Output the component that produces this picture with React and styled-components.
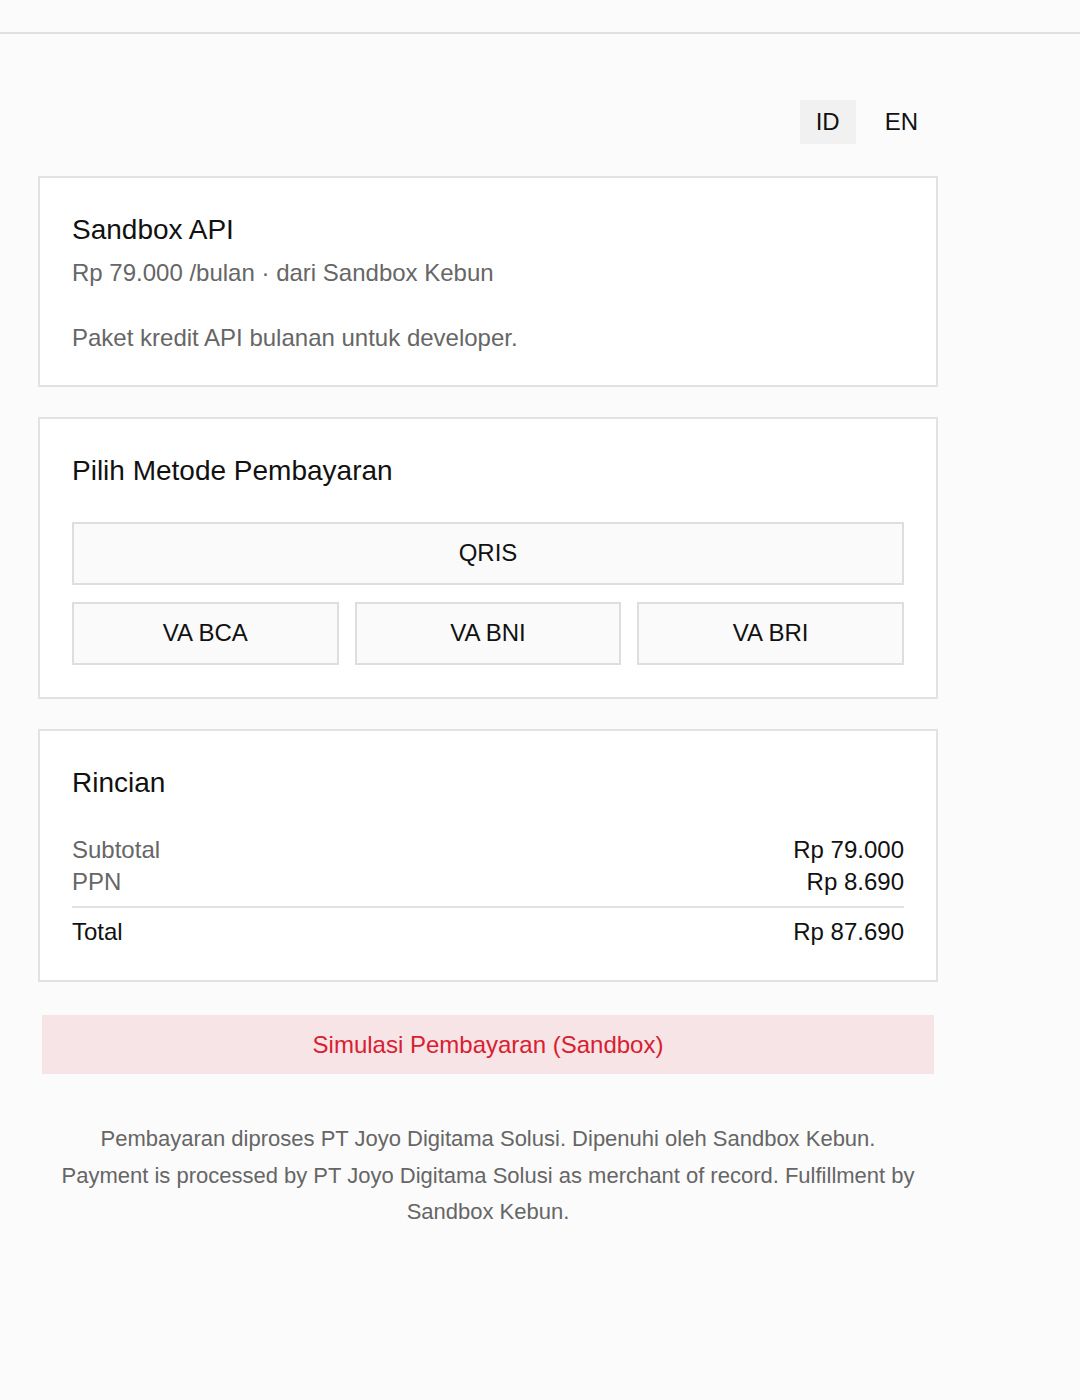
import React, { useState } from 'react';
import styled, { createGlobalStyle } from 'styled-components';

const GlobalStyle = createGlobalStyle`
  html, body {
    margin: 0;
    padding: 0;
    background: #fbfbfb;
    font-family: "Liberation Sans", Arial, sans-serif;
    color: #111;
  }
  * { box-sizing: border-box; }
`;

const TopBar = styled.div`
  height: 34px;
  border-bottom: 2px solid #e0e0e0;
`;

const Page = styled.main`
  width: 900px;
  margin-left: 38px;
  padding-top: 66px;
  padding-bottom: 120px;
`;

const LangRow = styled.div`
  display: flex;
  justify-content: flex-end;
  gap: 13px;
  padding-right: 4px;
  margin-bottom: 32px;
`;

const LangButton = styled.button`
  display: block;
  height: 44px;
  padding: 0 16px;
  border: none;
  background: ${p => (p.active ? '#f1f1f1' : 'transparent')};
  font-family: inherit;
  font-size: 24px;
  color: #111;
  cursor: pointer;
`;

const Card = styled.section`
  background: #fff;
  border: 2px solid #e2e2e2;
  padding: 32px;
  margin-bottom: 30px;
`;

const CardTitle = styled.h2`
  margin: 0 0 ${p => p.gap || 0}px;
  font-size: 28px;
  font-weight: 400;
  line-height: 1.4;
  color: #111;
`;

const Meta = styled.p`
  margin: ${p => p.top || 0}px 0 0;
  font-size: 24px;
  line-height: 1.2;
  color: #666;
`;

const Methods = styled.div`
  display: grid;
  grid-template-columns: repeat(3, 1fr);
  gap: 17px 16px;
`;

const MethodButton = styled.button`
  grid-column: ${p => (p.wide ? '1 / -1' : 'auto')};
  height: 63px;
  border: 2px solid #dedede;
  background: ${p => (p.selected ? '#f0f0f0' : '#fafafa')};
  font-family: inherit;
  font-size: 24px;
  color: #111;
  cursor: pointer;
`;

const Row = styled.div`
  display: flex;
  justify-content: space-between;
  font-size: 24px;
  line-height: 32px;
  color: ${p => (p.strong ? '#111' : '#666')};
`;

const Value = styled.span`
  color: #111;
`;

const Divider = styled.hr`
  border: none;
  border-top: 2px solid #e2e2e2;
  margin: 8px 0 8px;
`;

const PayButton = styled.button`
  display: block;
  width: calc(100% - 8px);
  margin: 33px auto 0;
  height: 59px;
  border: none;
  background: #f6e4e6;
  color: #d9202f;
  font-family: inherit;
  font-size: 24px;
  cursor: pointer;
`;

const Footer = styled.p`
  margin: 47px 0 0;
  text-align: center;
  font-size: 22px;
  line-height: 36.5px;
  color: #666;
`;

const methods = ['VA BCA', 'VA BNI', 'VA BRI'];

export default function App() {
  const [lang, setLang] = useState('ID');
  const [method, setMethod] = useState(null);

  return (
    <>
      <GlobalStyle />
      <TopBar />
      <Page>
        <LangRow>
          <LangButton active={lang === 'ID'} onClick={() => setLang('ID')}>ID</LangButton>
          <LangButton active={lang === 'EN'} onClick={() => setLang('EN')}>EN</LangButton>
        </LangRow>

        <Card>
          <CardTitle>Sandbox API</CardTitle>
          <Meta top={10}>Rp 79.000 /bulan · dari Sandbox Kebun</Meta>
          <Meta top={36}>Paket kredit API bulanan untuk developer.</Meta>
        </Card>

        <Card>
          <CardTitle gap={32}>Pilih Metode Pembayaran</CardTitle>
          <Methods>
            <MethodButton wide selected={method === 'QRIS'} onClick={() => setMethod('QRIS')}>
              QRIS
            </MethodButton>
            {methods.map(m => (
              <MethodButton key={m} selected={method === m} onClick={() => setMethod(m)}>
                {m}
              </MethodButton>
            ))}
          </Methods>
        </Card>

        <Card>
          <CardTitle gap={32}>Rincian</CardTitle>
          <Row>
            <span>Subtotal</span>
            <Value>Rp 79.000</Value>
          </Row>
          <Row>
            <span>PPN</span>
            <Value>Rp 8.690</Value>
          </Row>
          <Divider />
          <Row strong>
            <span>Total</span>
            <Value>Rp 87.690</Value>
          </Row>
        </Card>

        <PayButton>Simulasi Pembayaran (Sandbox)</PayButton>

        <Footer>
          Pembayaran diproses PT Joyo Digitama Solusi. Dipenuhi oleh Sandbox Kebun.
          <br />
          Payment is processed by PT Joyo Digitama Solusi as merchant of record. Fulfillment by Sandbox Kebun.
        </Footer>
      </Page>
    </>
  );
}
